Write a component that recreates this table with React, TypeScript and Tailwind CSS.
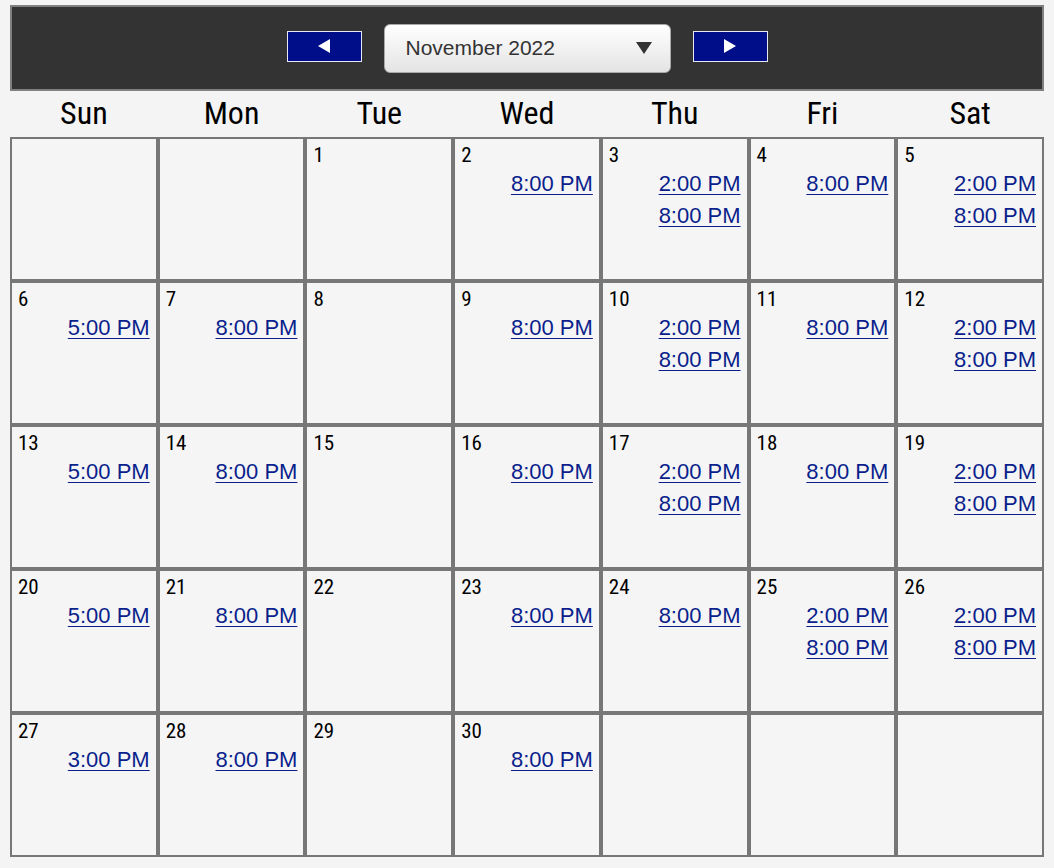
import React from 'react'

type Day = { n?: number; times?: string[] }

const weeks: Day[][] = [
  [{}, {}, { n: 1 }, { n: 2, times: ['8:00 PM'] }, { n: 3, times: ['2:00 PM', '8:00 PM'] }, { n: 4, times: ['8:00 PM'] }, { n: 5, times: ['2:00 PM', '8:00 PM'] }],
  [{ n: 6, times: ['5:00 PM'] }, { n: 7, times: ['8:00 PM'] }, { n: 8 }, { n: 9, times: ['8:00 PM'] }, { n: 10, times: ['2:00 PM', '8:00 PM'] }, { n: 11, times: ['8:00 PM'] }, { n: 12, times: ['2:00 PM', '8:00 PM'] }],
  [{ n: 13, times: ['5:00 PM'] }, { n: 14, times: ['8:00 PM'] }, { n: 15 }, { n: 16, times: ['8:00 PM'] }, { n: 17, times: ['2:00 PM', '8:00 PM'] }, { n: 18, times: ['8:00 PM'] }, { n: 19, times: ['2:00 PM', '8:00 PM'] }],
  [{ n: 20, times: ['5:00 PM'] }, { n: 21, times: ['8:00 PM'] }, { n: 22 }, { n: 23, times: ['8:00 PM'] }, { n: 24, times: ['8:00 PM'] }, { n: 25, times: ['2:00 PM', '8:00 PM'] }, { n: 26, times: ['2:00 PM', '8:00 PM'] }],
  [{ n: 27, times: ['3:00 PM'] }, { n: 28, times: ['8:00 PM'] }, { n: 29 }, { n: 30, times: ['8:00 PM'] }, {}, {}, {}],
]

const dayNames = ['Sun', 'Mon', 'Tue', 'Wed', 'Thu', 'Fri', 'Sat']

function NavButton({ dir }: { dir: 'prev' | 'next' }) {
  return (
    <button className="w-[75px] h-[31px] mb-[4px] bg-[#000e8a] border border-[#e8e8f4] flex items-center justify-center">
      <svg width="16" height="14" viewBox="0 0 16 14">
        {dir === 'prev' ? (
          <polygon points="14,0 14,14 2,7" fill="#fff" />
        ) : (
          <polygon points="2,0 2,14 14,7" fill="#fff" />
        )}
      </svg>
    </button>
  )
}

export default function App() {
  return (
    <div className="min-h-screen bg-[#f4f4f4] px-[10px] pt-[5px] font-['Liberation_Sans']">
      {/* Month nav */}
      <div className="h-[86px] bg-[#333333] border-2 border-[#808080] flex items-center justify-center gap-[22px]">
        <NavButton dir="prev" />
        <div className="w-[287px] h-[49px] rounded-[6px] border border-[#a9a9a9] bg-gradient-to-b from-[#ffffff] to-[#e4e4e4] flex items-center justify-between pl-[21px] pr-[18px]">
          <span className="text-[21px] text-[#333]">November 2022</span>
          <svg width="16" height="12" viewBox="0 0 16 12">
            <polygon points="0,0 16,0 8,12" fill="#333" />
          </svg>
        </div>
        <NavButton dir="next" />
      </div>

      {/* Weekday header */}
      <div className="grid grid-cols-7 h-[46px] items-center font-['Roboto_Condensed']">
        {dayNames.map((d) => (
          <div key={d} className="text-center text-[32px] leading-none text-black pb-[3px]">
            {d}
          </div>
        ))}
      </div>

      {/* Calendar grid */}
      <div className="grid grid-cols-7">
        {weeks.flat().map((day, i) => (
          <div key={i} className="h-[144px] border-2 border-[#777] bg-[#f5f5f5] px-[6px] pt-[4px]">
            {day.n && (
              <div className="font-['Roboto_Condensed'] text-[21px] leading-[25px] text-black">{day.n}</div>
            )}
            {day.times?.map((t) => (
              <div key={t} className="text-right text-[22px] leading-[32px]">
                <a href="#" className="text-[#0a1f8c] underline underline-offset-[3px] decoration-1">
                  {t}
                </a>
              </div>
            ))}
          </div>
        ))}
      </div>
    </div>
  )
}
